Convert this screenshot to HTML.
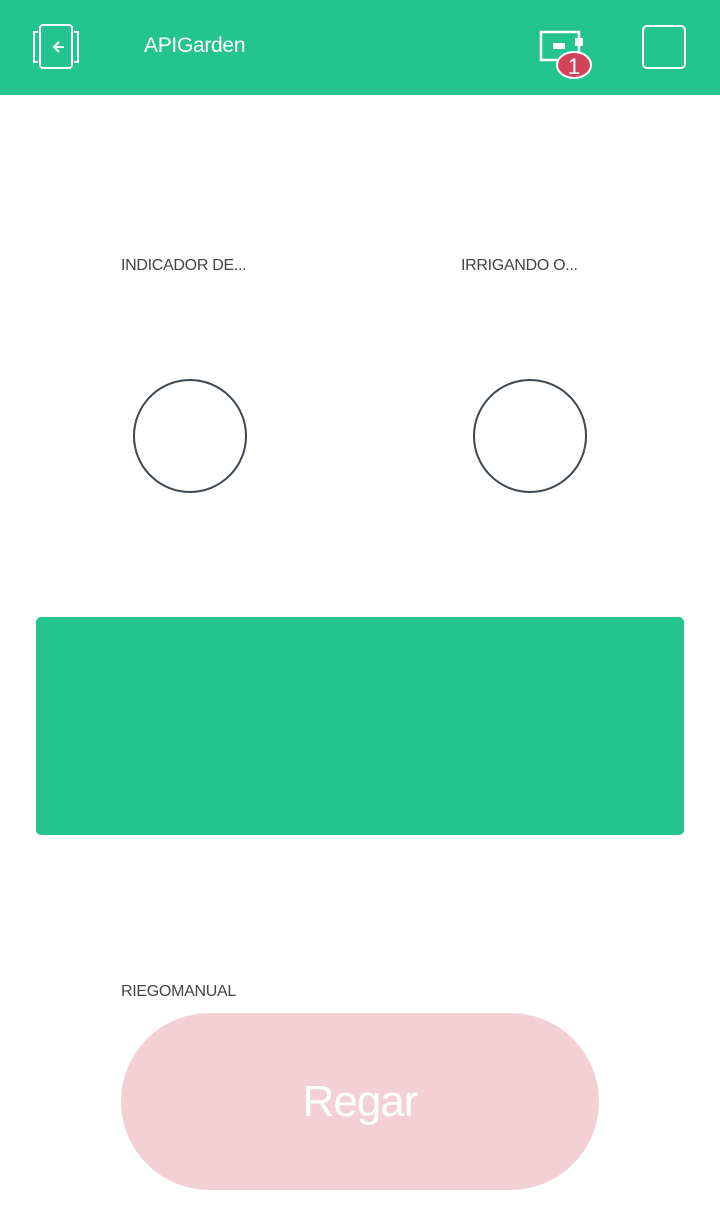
<!DOCTYPE html>
<html><head><meta charset="utf-8"><style>
body{margin:0;width:720px;height:1229px;background:#fff;position:relative;font-family:"Liberation Sans",sans-serif;overflow:hidden}
.hdr{position:absolute;left:0;top:0;width:720px;height:95px;background:#23c48e}
.t{position:absolute;color:#fff;font-size:21px;left:144px;top:34px;letter-spacing:-0.3px}
.lbl{position:absolute;font-size:16px;color:#444;letter-spacing:-0.3px}
.c{position:absolute;width:110px;height:110px;border:2px solid #3d4852;border-radius:50%}
</style></head><body>
<div class="hdr">
<svg style="position:absolute;left:32px;top:24px" width="48" height="46" viewBox="0 0 48 46" fill="none" stroke="#fff" stroke-width="2">
<rect x="8" y="1" width="32" height="43" rx="3"/>
<path d="M6 8H2V38H6M42 8H46V38H42"/>
<path d="M32 23H23M27 18L22 23L27 28"/>
</svg>
<div class="t">APIGarden</div>
<svg style="position:absolute;left:538px;top:28px" width="56" height="52" viewBox="0 0 56 52">
<rect x="3" y="4" width="38" height="28" fill="none" stroke="#fff" stroke-width="2.5"/>
<rect x="15" y="15" width="12" height="6" fill="#fff"/>
<rect x="37" y="10" width="8" height="8" fill="#fff"/>
<ellipse cx="36" cy="37" rx="17" ry="13" fill="#d3435c" stroke="#fff" stroke-width="2"/>
<text x="36" y="46" font-size="22" fill="#fff" text-anchor="middle" font-family="Liberation Sans">1</text>
</svg>
<div style="position:absolute;left:642px;top:25px;width:40px;height:40px;border:2px solid #fff;border-radius:5px"></div>
</div>
<div class="lbl" style="left:121px;top:257px">INDICADOR DE...</div>
<div class="lbl" style="left:461px;top:257px">IRRIGANDO O...</div>
<div class="c" style="left:133px;top:379px"></div>
<div class="c" style="left:473px;top:379px"></div>
<div style="position:absolute;left:36px;top:617px;width:648px;height:218px;background:#23c48e;border-radius:5px"></div>
<div class="lbl" style="left:121px;top:983px">RIEGOMANUAL</div>
<div style="position:absolute;left:121px;top:1013px;width:478px;height:177px;background:#f2d0d5;border-radius:89px;color:#fff;font-size:44px;letter-spacing:-1px;text-align:center;line-height:177px">Regar</div>
</body></html>
